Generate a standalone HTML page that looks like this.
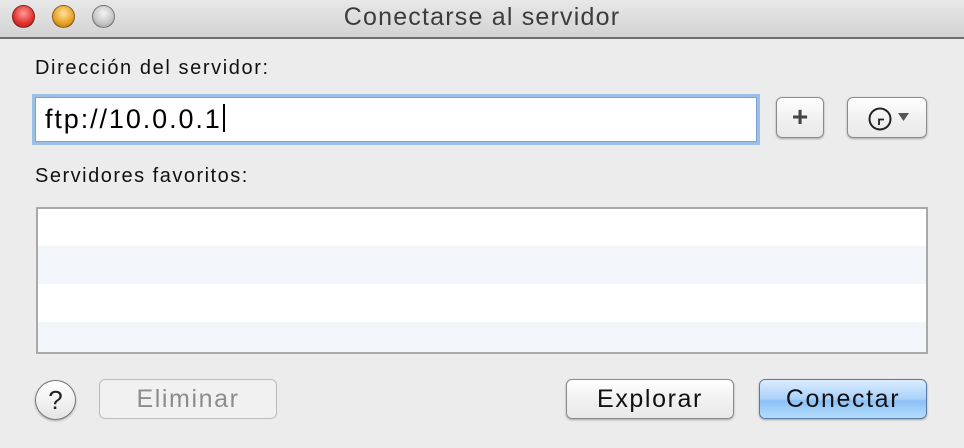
<!DOCTYPE html>
<html><head><style>
body{margin:0;width:964px;height:448px;background:#ececec;font-family:"Liberation Sans",sans-serif;position:relative;overflow:hidden}
.a{position:absolute}
.tb{left:0;top:0;width:964px;height:37px;background:linear-gradient(#e8e8e8,#d3d3d3);border-bottom:2px solid #6e6e6e}
.tl{width:23px;height:23px;border-radius:50%;top:5px;border:1px solid rgba(0,0,0,.4);box-sizing:border-box}
.btn{border:1px solid #8a8a8a;border-radius:6px;background:linear-gradient(#fff,#f1f1f1 50%,#e9e9e9);box-shadow:0 1px 2px rgba(0,0,0,.3);box-sizing:border-box;text-align:center;font-size:25px;line-height:38px;letter-spacing:1.6px}
</style></head><body>
<div class="a tb"></div>
<div class="a tl" style="left:12px;background:radial-gradient(circle at 50% 35%,#ff9a9a,#e0302b 60%,#a81d1a)"></div>
<div class="a tl" style="left:52px;background:radial-gradient(circle at 50% 35%,#ffe39a,#e69f23 60%,#b06e10)"></div>
<div class="a tl" style="left:92px;background:radial-gradient(circle at 50% 35%,#f4f4f4,#c4c4c4 60%,#9a9a9a)"></div>
<div class="a" style="left:0;width:964px;top:3px;text-align:center;font-size:25px;letter-spacing:1.2px;color:#3c3c3c">Conectarse al servidor</div>
<div class="a" style="left:35px;top:57px;font-size:20px;letter-spacing:1.6px;color:#111">Dirección del servidor:</div>
<div class="a" style="left:35px;top:97px;width:722px;height:45px;background:#fff;border:1px solid #7da2ce;box-shadow:0 0 0 3px #9bc0e8;box-sizing:border-box"></div>
<div class="a" style="left:45px;top:104px;font-size:27px;letter-spacing:1.9px;color:#000">ftp://10.0.0.1<span style="display:inline-block;width:2px;height:28px;background:#000;vertical-align:-4px;margin-left:1px"></span></div>
<div class="a btn" style="left:776px;top:97px;width:48px;height:41px;font-weight:bold;color:#444;font-size:28px;letter-spacing:0">+</div>
<div class="a btn" style="left:847px;top:97px;width:80px;height:41px">
<svg width="80" height="41" style="position:absolute;left:0;top:0"><circle cx="32" cy="21" r="10.5" fill="none" stroke="#222" stroke-width="2"/><path d="M31 27V21.5h5" fill="none" stroke="#222" stroke-width="1.8"/><path d="M50 15h11l-5.5 8z" fill="#555"/></svg></div>
<div class="a" style="left:35px;top:165px;font-size:20px;letter-spacing:1.5px;color:#111">Servidores favoritos:</div>
<div class="a" style="left:36px;top:207px;width:892px;height:147px;border:2px solid #a9a9a9;box-sizing:border-box;background:linear-gradient(#fff 0,#fff 37px,#f2f5fa 37px,#f2f5fa 75px,#fff 75px,#fff 113px,#f2f5fa 113px)"></div>
<div class="a" style="left:35px;top:380px;width:41px;height:40px;border-radius:50%;border:1px solid #777;background:linear-gradient(#fff,#e5e5e5);box-shadow:0 1px 2px rgba(0,0,0,.3);box-sizing:border-box;text-align:center;font-size:26px;line-height:38px;color:#222">?</div>
<div class="a btn" style="left:99px;top:379px;width:178px;height:40px;color:#8c8c8c;border-color:#bbb;box-shadow:none;background:#f1f1f1">Eliminar</div>
<div class="a btn" style="left:566px;top:379px;width:168px;height:40px;color:#111">Explorar</div>
<div class="a btn" style="left:759px;top:379px;width:168px;height:40px;color:#111;border-color:#5a7aa6;background:linear-gradient(#dcecfd,#a9d1fb 50%,#8cc1f6 55%,#b4dcfb)">Conectar</div>
</body></html>
